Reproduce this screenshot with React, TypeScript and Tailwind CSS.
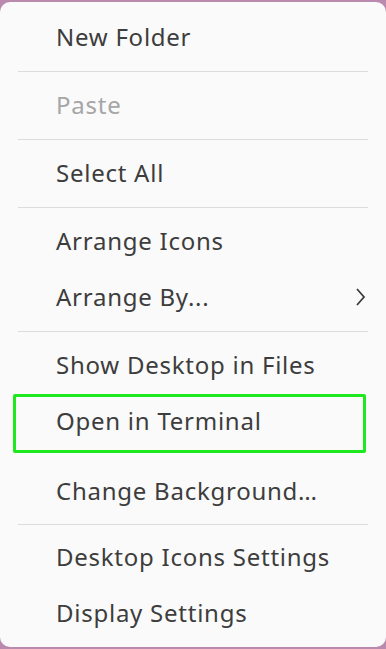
type Entry =
  | { kind: "item"; label: string; disabled?: boolean; submenu?: boolean; marked?: boolean }
  | { kind: "sep"; line?: boolean; h: string };

const ENTRIES: Entry[] = [
  { kind: "item", label: "New Folder" },
  { kind: "sep", line: true, h: "h-[12px]" },
  { kind: "item", label: "Paste", disabled: true },
  { kind: "sep", line: true, h: "h-[12px]" },
  { kind: "item", label: "Select All" },
  { kind: "sep", line: true, h: "h-[12px]" },
  { kind: "item", label: "Arrange Icons" },
  { kind: "item", label: "Arrange By...", submenu: true },
  { kind: "sep", line: true, h: "h-[12px]" },
  { kind: "item", label: "Show Desktop in Files" },
  { kind: "item", label: "Open in Terminal", marked: true },
  { kind: "sep", h: "h-[14px]" },
  { kind: "item", label: "Change Background…" },
  { kind: "sep", line: true, h: "h-[10px]" },
  { kind: "item", label: "Desktop Icons Settings" },
  { kind: "item", label: "Display Settings" },
];

function Chevron() {
  return (
    <svg width="11" height="20" viewBox="0 0 11 20" className="mr-[2px] text-[#3d3d3d]">
      <polyline points="2,2 9,10 2,18" fill="none" stroke="currentColor" strokeWidth="1.8" />
    </svg>
  );
}

export default function App() {
  return (
    <div className="h-[649px] w-[386px] overflow-hidden bg-[#b98aae] pt-[2px] [font-family:'Noto_Sans','Open_Sans',sans-serif]">
      <div className="flex h-[645px] flex-col rounded-[10px] bg-[#fafafa] pt-[7px]">
        {ENTRIES.map((e, i) =>
          e.kind === "sep" ? (
            <div key={i} className={"flex items-center px-[18px] " + e.h}>
              {e.line && <div className="h-px w-full bg-[#dcdcdc]" />}
            </div>
          ) : (
            <div key={i} className="relative flex h-[56px] items-center pl-[56px] pr-[18px]">
              <span
                className={
                  "flex-1 text-[24px] leading-none tracking-[0.75px] " +
                  (e.disabled ? "text-[#a6a6a6]" : "text-[#3d3d3d]")
                }
              >
                {e.label}
              </span>
              {e.submenu && <Chevron />}
              {e.marked && (
                <div className="absolute left-[13px] right-[20px] top-[1px] bottom-[-4px] rounded-[2px] border-[3px] border-[#1ee81e]" />
              )}
            </div>
          )
        )}
      </div>
    </div>
  );
}
